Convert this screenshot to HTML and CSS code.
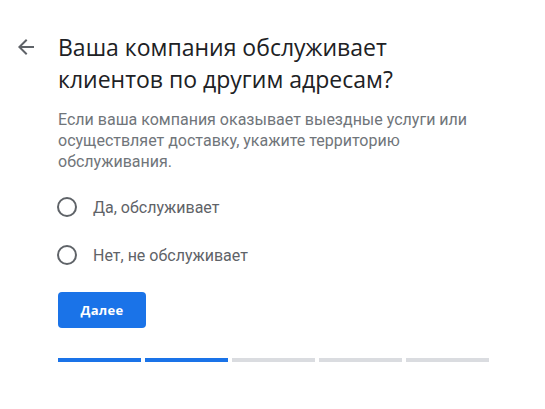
FILE: index.html
```html
<!DOCTYPE html>
<html lang="ru">
<head>
<meta charset="utf-8">
<link rel="stylesheet" href="styles.css">
</head>
<body>
<main class="page">
  <div class="head">
    <button class="back" aria-label="Назад">
      <svg width="24" height="24" viewBox="0 0 24 24"><path d="M20 11H7.83l5.59-5.59L12 4l-8 8 8 8 1.41-1.41L7.83 13H20v-2z" fill="#5f6368"/></svg>
    </button>
    <h1 class="title">Ваша компания обслуживает клиентов по другим адресам?</h1>
  </div>
  <div class="body">
    <p class="desc">Если ваша компания оказывает выездные услуги или осуществляет доставку, укажите территорию обслуживания.</p>
    <div class="options">
      <label class="opt"><span class="radio"></span><span class="lbl">Да, обслуживает</span></label>
      <label class="opt"><span class="radio"></span><span class="lbl">Нет, не обслуживает</span></label>
    </div>
    <button class="next">Далее</button>
    <div class="progress">
      <span class="seg on"></span><span class="seg on"></span><span class="seg"></span><span class="seg"></span><span class="seg"></span>
    </div>
  </div>
</main>
</body>
</html>
```
FILE: styles.css
```css
* { box-sizing: border-box; }
html, body { margin: 0; background: #fff; }
body { font-family: Roboto, "Noto Sans", sans-serif; }
.page { padding: 31px 0 0 0; width: 545px; }
.head { display: flex; align-items: flex-start; }
.back {
  width: 58px; height: 32px; padding: 0 0 0 14px; border: 0; background: none;
  display: flex; align-items: center; justify-content: flex-start; flex: none;
}
.title {
  margin: 0; font-family: "Open Sans", Roboto, sans-serif; font-weight: 400;
  font-size: 23px; line-height: 32px; color: #202124; width: 420px;
}
.body { padding-left: 58px; }
.desc {
  margin: 14px 0 0; font-size: 16px; line-height: 21px; color: #70757a; width: 440px;
}
.options { margin-top: 11px; display: flex; flex-direction: column; }
.opt { display: flex; align-items: center; height: 48px; }
.radio {
  width: 20px; height: 20px; border: 2px solid #5f6368; border-radius: 50%; flex: none; margin-left: -1px;
}
.lbl { margin-left: 16px; font-size: 16px; color: #5f6368; }
.next {
  margin-top: 13px; width: 88px; height: 36px; border: 0; border-radius: 4px;
  background: #1a73e8; color: #fff; font-family: "Open Sans", Roboto, sans-serif; font-weight: 700;
  font-size: 13px; letter-spacing: 0.3px; display: block;
}
.progress { display: flex; gap: 4px; margin-top: 30px; width: 431px; }
.seg { flex: 1; height: 4px; background: #dadce0; }
.seg.on { background: #1a73e8; }
```
